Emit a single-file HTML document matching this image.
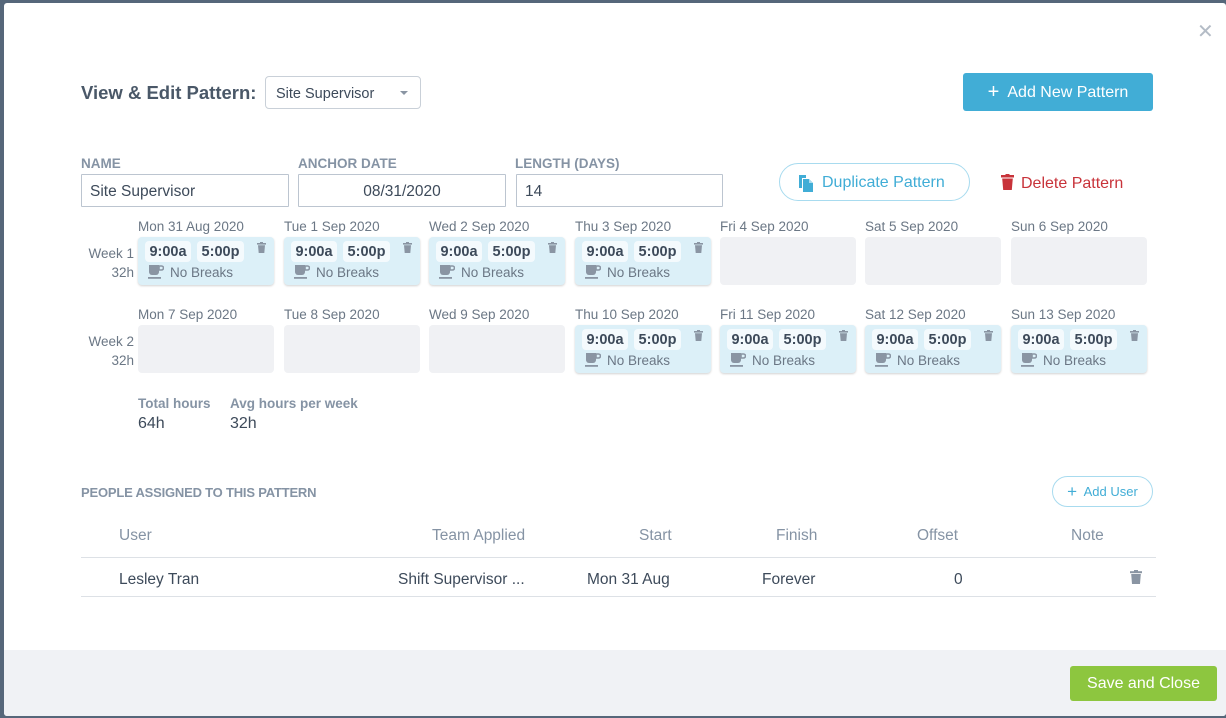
<!DOCTYPE html>
<html><head><meta charset="utf-8"><style>
*{box-sizing:border-box;margin:0;padding:0}
body{width:1226px;height:718px;background:#56677a;font-family:"Liberation Sans",sans-serif;position:relative;overflow:hidden;color:#3d4a5a}
.m{position:absolute;left:4px;top:3px;width:1222px;height:713px;background:#fff;border-radius:3px;overflow:hidden}
.a{position:absolute;white-space:nowrap}
.lbl{font-size:13.5px;font-weight:bold;color:#8593a4}
.inp{position:absolute;height:33px;border:1px solid #bcc5d0;font-size:15.5px;color:#3d4a5a;padding:8px 8px 6px;border-radius:1px}
.dt{position:absolute;font-size:13.5px;color:#6b7785;white-space:nowrap}
.c{position:absolute;width:136px;height:48px;background:#dcf0f8;border-radius:4px;box-shadow:0 1px 2px rgba(0,0,0,.18)}
.e{position:absolute;width:136px;height:48px;background:#f0f1f4;border-radius:4px}
.ch{position:absolute;top:4px;height:21px;background:#f4fafd;border-radius:4px;font-size:14.5px;font-weight:bold;color:#3d4a5a;text-align:center;line-height:22px}
.nb{position:absolute;left:32px;top:28px;font-size:13.5px;color:#6b7785}
.tr{position:absolute;left:119px;top:5px}
.cf{position:absolute;left:10px;top:28px}
.wk{position:absolute;font-size:13.5px;color:#6b7785;text-align:right;width:60px;line-height:19px}
.th{position:absolute;font-size:15.5px;color:#8593a4;top:524px}
.td{position:absolute;font-size:15.5px;color:#3d4a5a;top:568px}
</style></head><body>
<div class="m">
<div class="a" style="left:1193px;top:16px;font-size:20px;color:#b4bcc6">✕</div>
<div class="a" style="left:77px;top:79px;font-size:18.5px;font-weight:bold;color:#4a5868">View &amp; Edit Pattern:</div>
<div class="a" style="left:261px;top:73px;width:156px;height:33px;border:1px solid #c9d0d8;border-radius:4px;font-size:14.5px;padding:9px 10px 0;color:#3d4a5a">Site Supervisor<span style="position:absolute;left:134px;top:14px;border-left:4px solid transparent;border-right:4px solid transparent;border-top:4px solid #8a95a3"></span></div>
<div class="a" style="left:959px;top:70px;width:190px;height:38px;background:#41add6;border-radius:3px;color:#fff;font-size:16px;text-align:center;line-height:39px"><span style="font-size:20px;vertical-align:-1px">+</span>&nbsp; Add New Pattern</div>

<div class="a lbl" style="left:77px;top:153px">NAME</div>
<div class="a lbl" style="left:294px;top:153px">ANCHOR DATE</div>
<div class="a lbl" style="left:511px;top:153px">LENGTH (DAYS)</div>
<div class="inp" style="left:77px;top:171px;width:208px">Site Supervisor</div>
<div class="inp" style="left:294px;top:171px;width:208px;text-align:center">08/31/2020</div>
<div class="inp" style="left:512px;top:171px;width:207px">14</div>

<div class="a" style="left:775px;top:160px;width:191px;height:38px;border:1px solid #a8dbef;border-radius:19px;color:#41add6;font-size:16px;line-height:38px;padding-left:42px">Duplicate Pattern
<svg style="position:absolute;left:18px;top:10px" width="16" height="18" viewBox="0 0 16 18"><path d="M1 1h7v3H4v10H1z" fill="#41add6"/><path d="M5 5h6l4 4v9H5z" fill="#41add6"/><path d="M11 5v4h4" fill="#a8dbef"/></svg></div>
<div class="a" style="left:997px;top:171px;font-size:16px;color:#c8333a"><svg style="vertical-align:-2px;margin-right:7px" width="13" height="16" viewBox="0 0 13 16"><rect x="0" y="1" width="13" height="2.5" fill="#c8333a"/><rect x="4.5" y="0" width="4" height="2" fill="#c8333a"/><path d="M1.2 4.5h10.6l-1 11.5H2.2z" fill="#c8333a"/></svg>Delete Pattern</div>

<div class="wk" style="left:70px;top:241px">Week 1<br>32h</div>
<div class="wk" style="left:70px;top:329px">Week 2<br>32h</div>

<div class="dt" style="left:134px;top:216px">Mon 31 Aug 2020</div>
<div class="dt" style="left:280px;top:216px">Tue 1 Sep 2020</div>
<div class="dt" style="left:425px;top:216px">Wed 2 Sep 2020</div>
<div class="dt" style="left:571px;top:216px">Thu 3 Sep 2020</div>
<div class="dt" style="left:716px;top:216px">Fri 4 Sep 2020</div>
<div class="dt" style="left:861px;top:216px">Sat 5 Sep 2020</div>
<div class="dt" style="left:1007px;top:216px">Sun 6 Sep 2020</div>
<div class="dt" style="left:134px;top:304px">Mon 7 Sep 2020</div>
<div class="dt" style="left:280px;top:304px">Tue 8 Sep 2020</div>
<div class="dt" style="left:425px;top:304px">Wed 9 Sep 2020</div>
<div class="dt" style="left:571px;top:304px">Thu 10 Sep 2020</div>
<div class="dt" style="left:716px;top:304px">Fri 11 Sep 2020</div>
<div class="dt" style="left:861px;top:304px">Sat 12 Sep 2020</div>
<div class="dt" style="left:1007px;top:304px">Sun 13 Sep 2020</div>

<div class="c" style="left:134px;top:234px"><div class="ch" style="left:7px;width:46px">9:00a</div><div class="ch" style="left:59px;width:47px">5:00p</div><svg class="tr" width="9" height="11" viewBox="0 0 9 11"><rect y="1" width="9" height="1.6" fill="#8a95a3"/><rect x="3" width="3" height="1.5" fill="#8a95a3"/><path d="M1 3.2h7l-.7 7.8H1.7z" fill="#8a95a3"/></svg><svg class="cf" width="16" height="15" viewBox="0 0 16 15"><path d="M1 0h10v7a3 3 0 0 1-3 3H4a3 3 0 0 1-3-3z" fill="#8a95a3"/><path d="M11 1h2.5a2 2 0 0 1 0 4H11z" fill="none" stroke="#8a95a3" stroke-width="1.6"/><rect x="0" y="12" width="13" height="1.8" fill="#8a95a3"/></svg><div class="nb">No Breaks</div></div>
<div class="c" style="left:280px;top:234px"><div class="ch" style="left:7px;width:46px">9:00a</div><div class="ch" style="left:59px;width:47px">5:00p</div><svg class="tr" width="9" height="11" viewBox="0 0 9 11"><rect y="1" width="9" height="1.6" fill="#8a95a3"/><rect x="3" width="3" height="1.5" fill="#8a95a3"/><path d="M1 3.2h7l-.7 7.8H1.7z" fill="#8a95a3"/></svg><svg class="cf" width="16" height="15" viewBox="0 0 16 15"><path d="M1 0h10v7a3 3 0 0 1-3 3H4a3 3 0 0 1-3-3z" fill="#8a95a3"/><path d="M11 1h2.5a2 2 0 0 1 0 4H11z" fill="none" stroke="#8a95a3" stroke-width="1.6"/><rect x="0" y="12" width="13" height="1.8" fill="#8a95a3"/></svg><div class="nb">No Breaks</div></div>
<div class="c" style="left:425px;top:234px"><div class="ch" style="left:7px;width:46px">9:00a</div><div class="ch" style="left:59px;width:47px">5:00p</div><svg class="tr" width="9" height="11" viewBox="0 0 9 11"><rect y="1" width="9" height="1.6" fill="#8a95a3"/><rect x="3" width="3" height="1.5" fill="#8a95a3"/><path d="M1 3.2h7l-.7 7.8H1.7z" fill="#8a95a3"/></svg><svg class="cf" width="16" height="15" viewBox="0 0 16 15"><path d="M1 0h10v7a3 3 0 0 1-3 3H4a3 3 0 0 1-3-3z" fill="#8a95a3"/><path d="M11 1h2.5a2 2 0 0 1 0 4H11z" fill="none" stroke="#8a95a3" stroke-width="1.6"/><rect x="0" y="12" width="13" height="1.8" fill="#8a95a3"/></svg><div class="nb">No Breaks</div></div>
<div class="c" style="left:571px;top:234px"><div class="ch" style="left:7px;width:46px">9:00a</div><div class="ch" style="left:59px;width:47px">5:00p</div><svg class="tr" width="9" height="11" viewBox="0 0 9 11"><rect y="1" width="9" height="1.6" fill="#8a95a3"/><rect x="3" width="3" height="1.5" fill="#8a95a3"/><path d="M1 3.2h7l-.7 7.8H1.7z" fill="#8a95a3"/></svg><svg class="cf" width="16" height="15" viewBox="0 0 16 15"><path d="M1 0h10v7a3 3 0 0 1-3 3H4a3 3 0 0 1-3-3z" fill="#8a95a3"/><path d="M11 1h2.5a2 2 0 0 1 0 4H11z" fill="none" stroke="#8a95a3" stroke-width="1.6"/><rect x="0" y="12" width="13" height="1.8" fill="#8a95a3"/></svg><div class="nb">No Breaks</div></div>
<div class="e" style="left:716px;top:234px"></div>
<div class="e" style="left:861px;top:234px"></div>
<div class="e" style="left:1007px;top:234px"></div>

<div class="e" style="left:134px;top:322px"></div>
<div class="e" style="left:280px;top:322px"></div>
<div class="e" style="left:425px;top:322px"></div>
<div class="c" style="left:571px;top:322px"><div class="ch" style="left:7px;width:46px">9:00a</div><div class="ch" style="left:59px;width:47px">5:00p</div><svg class="tr" width="9" height="11" viewBox="0 0 9 11"><rect y="1" width="9" height="1.6" fill="#8a95a3"/><rect x="3" width="3" height="1.5" fill="#8a95a3"/><path d="M1 3.2h7l-.7 7.8H1.7z" fill="#8a95a3"/></svg><svg class="cf" width="16" height="15" viewBox="0 0 16 15"><path d="M1 0h10v7a3 3 0 0 1-3 3H4a3 3 0 0 1-3-3z" fill="#8a95a3"/><path d="M11 1h2.5a2 2 0 0 1 0 4H11z" fill="none" stroke="#8a95a3" stroke-width="1.6"/><rect x="0" y="12" width="13" height="1.8" fill="#8a95a3"/></svg><div class="nb">No Breaks</div></div>
<div class="c" style="left:716px;top:322px"><div class="ch" style="left:7px;width:46px">9:00a</div><div class="ch" style="left:59px;width:47px">5:00p</div><svg class="tr" width="9" height="11" viewBox="0 0 9 11"><rect y="1" width="9" height="1.6" fill="#8a95a3"/><rect x="3" width="3" height="1.5" fill="#8a95a3"/><path d="M1 3.2h7l-.7 7.8H1.7z" fill="#8a95a3"/></svg><svg class="cf" width="16" height="15" viewBox="0 0 16 15"><path d="M1 0h10v7a3 3 0 0 1-3 3H4a3 3 0 0 1-3-3z" fill="#8a95a3"/><path d="M11 1h2.5a2 2 0 0 1 0 4H11z" fill="none" stroke="#8a95a3" stroke-width="1.6"/><rect x="0" y="12" width="13" height="1.8" fill="#8a95a3"/></svg><div class="nb">No Breaks</div></div>
<div class="c" style="left:861px;top:322px"><div class="ch" style="left:7px;width:46px">9:00a</div><div class="ch" style="left:59px;width:47px">5:00p</div><svg class="tr" width="9" height="11" viewBox="0 0 9 11"><rect y="1" width="9" height="1.6" fill="#8a95a3"/><rect x="3" width="3" height="1.5" fill="#8a95a3"/><path d="M1 3.2h7l-.7 7.8H1.7z" fill="#8a95a3"/></svg><svg class="cf" width="16" height="15" viewBox="0 0 16 15"><path d="M1 0h10v7a3 3 0 0 1-3 3H4a3 3 0 0 1-3-3z" fill="#8a95a3"/><path d="M11 1h2.5a2 2 0 0 1 0 4H11z" fill="none" stroke="#8a95a3" stroke-width="1.6"/><rect x="0" y="12" width="13" height="1.8" fill="#8a95a3"/></svg><div class="nb">No Breaks</div></div>
<div class="c" style="left:1007px;top:322px"><div class="ch" style="left:7px;width:46px">9:00a</div><div class="ch" style="left:59px;width:47px">5:00p</div><svg class="tr" width="9" height="11" viewBox="0 0 9 11"><rect y="1" width="9" height="1.6" fill="#8a95a3"/><rect x="3" width="3" height="1.5" fill="#8a95a3"/><path d="M1 3.2h7l-.7 7.8H1.7z" fill="#8a95a3"/></svg><svg class="cf" width="16" height="15" viewBox="0 0 16 15"><path d="M1 0h10v7a3 3 0 0 1-3 3H4a3 3 0 0 1-3-3z" fill="#8a95a3"/><path d="M11 1h2.5a2 2 0 0 1 0 4H11z" fill="none" stroke="#8a95a3" stroke-width="1.6"/><rect x="0" y="12" width="13" height="1.8" fill="#8a95a3"/></svg><div class="nb">No Breaks</div></div>

<div class="a" style="left:134px;top:393px;font-size:13.5px;font-weight:bold;color:#8593a4">Total hours</div>
<div class="a" style="left:134px;top:412px;font-size:16px;color:#3d4a5a">64h</div>
<div class="a" style="left:226px;top:393px;font-size:13.5px;font-weight:bold;color:#8593a4">Avg hours per week</div>
<div class="a" style="left:226px;top:412px;font-size:16px;color:#3d4a5a">32h</div>

<div class="a" style="left:77px;top:482px;font-size:13px;font-weight:bold;color:#8593a4;letter-spacing:-.2px">PEOPLE ASSIGNED TO THIS PATTERN</div>
<div class="a" style="left:1048px;top:473px;width:101px;height:31px;border:1px solid #a8dbef;border-radius:16px;color:#41add6;font-size:13px;line-height:30px;text-align:center"><span style="font-size:17px;vertical-align:-1px">+</span>&nbsp; Add User</div>

<div class="th" style="left:115px">User</div>
<div class="th" style="left:428px">Team Applied</div>
<div class="th" style="left:635px">Start</div>
<div class="th" style="left:772px">Finish</div>
<div class="th" style="left:913px">Offset</div>
<div class="th" style="left:1067px">Note</div>
<div class="a" style="left:77px;top:554px;width:1075px;height:1px;background:#dde1e6"></div>
<div class="td" style="left:115px">Lesley Tran</div>
<div class="td" style="left:394px">Shift Supervisor ...</div>
<div class="td" style="left:583px">Mon 31 Aug</div>
<div class="td" style="left:758px">Forever</div>
<div class="td" style="left:950px">0</div>
<svg class="a" style="left:1126px;top:567px" width="12" height="14" viewBox="0 0 12 14"><rect y="1.2" width="12" height="2" fill="#8a95a3"/><rect x="4" width="4" height="2" fill="#8a95a3"/><path d="M1.2 4h9.6l-.8 10H2z" fill="#8a95a3"/></svg>
<div class="a" style="left:77px;top:593px;width:1075px;height:1px;background:#dde1e6"></div>

<div class="a" style="left:0;top:647px;width:1222px;height:70px;background:#f0f2f5"></div>
<div class="a" style="left:1066px;top:663px;width:147px;height:35px;background:#8dc63f;border-radius:3px;color:#fff;font-size:16px;text-align:center;line-height:36px">Save and Close</div>
</div>
</body></html>
